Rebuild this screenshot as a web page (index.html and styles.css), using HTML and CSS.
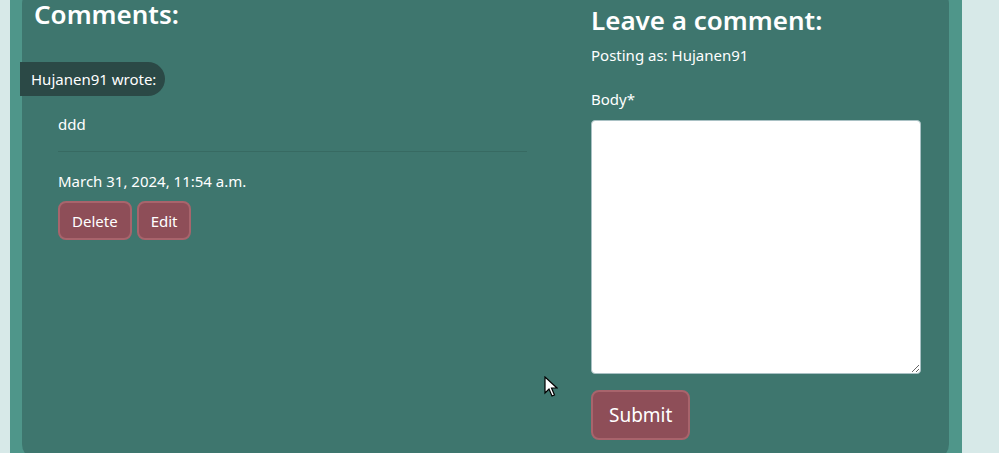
FILE: index.html
```html
<!DOCTYPE html>
<html lang="en">
<head>
<meta charset="utf-8">
<title>Comments</title>
<link rel="stylesheet" href="styles.css">
</head>
<body>
<div class="page">
  <div class="card">
    <section class="comments">
      <h2 class="heading heading-left">Comments:</h2>
      <div class="comment">
        <p class="author">Hujanen91 wrote:</p>
        <div class="comment-body">
          <p class="text">ddd</p>
          <hr class="divider">
          <p class="date">March 31, 2024, 11:54 a.m.</p>
          <div class="actions">
            <button class="btn">Delete</button>
            <button class="btn">Edit</button>
          </div>
        </div>
      </div>
    </section>
    <section class="form-col">
      <h2 class="heading heading-right">Leave a comment:</h2>
      <p class="posting">Posting as: Hujanen91</p>
      <form class="form">
        <label class="label" for="body">Body*</label>
        <textarea id="body" class="textarea"></textarea>
        <button type="button" class="btn btn-lg">Submit</button>
      </form>
    </section>
  </div>
  <svg class="cursor" width="14" height="22" viewBox="0 0 14 22"><path d="M1 1 L1 17 L5 13 L8 20 L10.5 19 L7.5 12 L13 12 Z" fill="#fff" stroke="#000" stroke-width="1.2" stroke-linejoin="miter"/></svg>
</div>
</body>
</html>
```
FILE: styles.css
```css
html, body {
  margin: 0;
  height: 100%;
  overflow: hidden;
}
body {
  background: #d7e9e8;
  font-family: "Noto Sans", "Open Sans", sans-serif;
  color: #fff;
}
.page {
  position: relative;
  display: flow-root;
  margin-left: 10px;
  width: 952px;
  height: 100%;
  background: #4f968a;
  padding: 0 13px 0 12px;
  box-sizing: border-box;
}
.card {
  margin-top: -12px;
  height: 472px;
  background: #3e766e;
  border-radius: 16px;
  display: grid;
  grid-template-columns: 1fr 330px;
  column-gap: 41px;
  padding: 0 28px 0 12px;
}
.heading {
  margin: 0;
  font-size: 26px;
  font-weight: 600;
  line-height: 36px;
}
.heading-left {
  line-height: 28px;
  padding-top: 12px;
}
.heading-right {
  padding-top: 14px;
}
.comment {
  margin-top: 34px;
}
.author {
  margin: 0 0 0 -14px;
  display: inline-block;
  background: #2b4946;
  font-size: 15px;
  line-height: 34px;
  padding: 0 9px 0 11px;
  border-radius: 0 17px 17px 0;
}
.comment-body {
  padding: 0 23px 0 24px;
}
.text {
  margin: 16px 0 0;
  font-size: 15px;
  line-height: 24px;
}
.divider {
  margin: 15px 0 0;
  border: 0;
  border-top: 1px solid #376a62;
}
.date {
  margin: 17px 0 0;
  font-size: 15px;
  line-height: 24px;
}
.actions {
  display: flex;
  gap: 5px;
  margin-top: 8px;
}
.btn {
  font-family: inherit;
  font-size: 15px;
  color: #fff;
  background: #8e4e58;
  border: 2px solid #a8646c;
  border-radius: 8px;
  height: 39px;
  padding: 0 12px;
  cursor: pointer;
}
.posting {
  margin: 5px 0 0;
  font-size: 15px;
  line-height: 24px;
}
.form {
  display: flex;
  flex-direction: column;
  align-items: flex-start;
}
.label {
  margin-top: 20px;
  font-size: 15px;
  line-height: 24px;
}
.textarea {
  margin-top: 9px;
  width: 330px;
  height: 254px;
  box-sizing: border-box;
  border: 1px solid #a9c1c4;
  border-radius: 4px;
  background: #fff;
}
.btn-lg {
  margin-top: 16px;
  font-size: 19px;
  height: 50px;
  padding: 0 16px;
}
.cursor {
  position: absolute;
  left: 534px;
  top: 376px;
}
```
